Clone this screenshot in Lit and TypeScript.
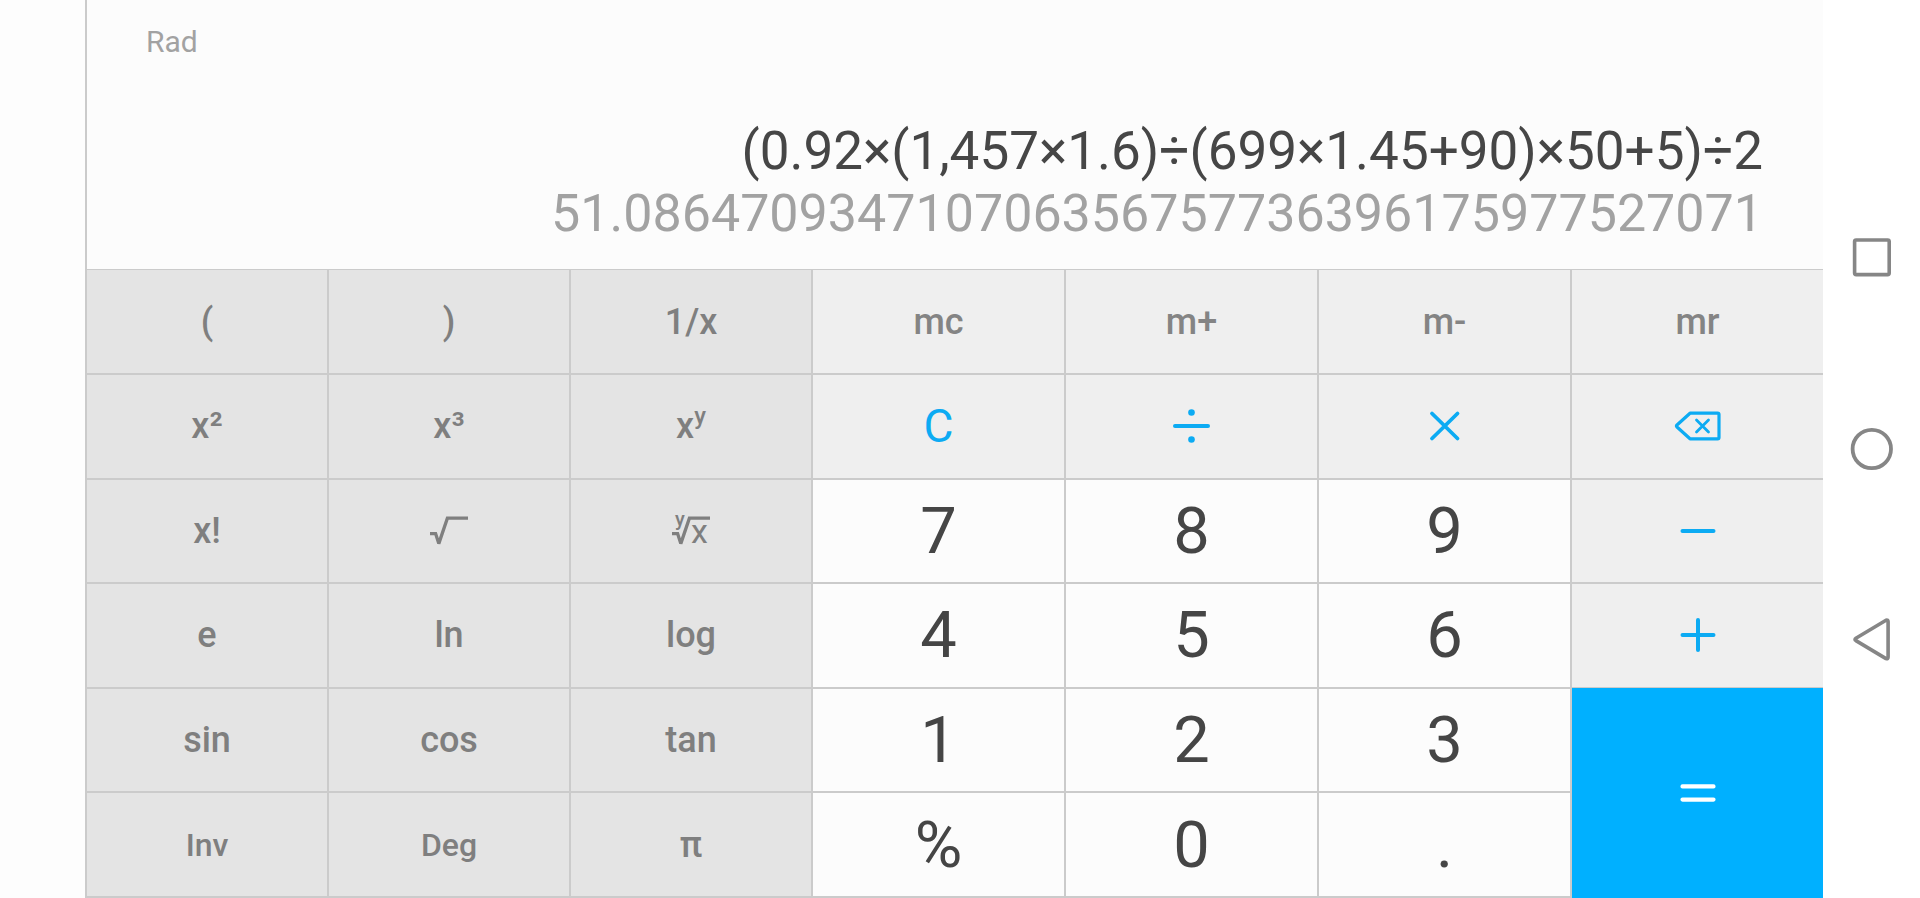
import { LitElement, html, css, svg, TemplateResult } from "lit";
import { customElement, property } from "lit/decorators.js";
import { classMap } from "lit/directives/class-map.js";

type Tone = "science" | "memory" | "action" | "digit" | "equals";

interface Key {
  label: string | TemplateResult;
  tone: Tone;
  name?: string;
  small?: boolean;
}

const icon = (width: number, height: number, body: TemplateResult) => html`
  <svg width=${width} height=${height} viewBox="0 0 ${width} ${height}" fill="none"
    stroke="currentColor" stroke-linecap="round" stroke-linejoin="round" aria-hidden="true">${body}</svg>`;

const divide = icon(40, 40, svg`
  <path d="M3 20H36" stroke-width="4"/>
  <g fill="currentColor" stroke="none"><circle cx="19.5" cy="6.5" r="3.3"/><circle cx="19.5" cy="33.5" r="3.3"/></g>`);
const times = icon(40, 40, svg`<path d="M7 7.5L32.5 32.5M32.5 7.5L7 32.5" stroke-width="3.8"/>`);
const minus = icon(40, 40, svg`<path d="M4.5 20H35.5" stroke-width="4"/>`);
const plus = icon(40, 40, svg`<path d="M4.5 20H35.5M20 5V35" stroke-width="4"/>`);
const equals = icon(40, 40, svg`<path d="M4.5 13.4H35.5M4.5 26.6H35.5" stroke-width="4.2"/>`);
const erase = icon(48, 32, svg`
  <path d="M16 3.2H43.6Q45 3.2 45 4.6V27.4Q45 28.8 43.6 28.8H16L3 17Q2 16 3 15Z" stroke-width="3.2"/>
  <path d="M22.5 10L34.5 22M34.5 10L22.5 22" stroke-width="2.8"/>`);
const root = icon(40, 32, svg`
  <path d="M1 18.6H6.6L9.8 28.6L18.4 3.2H39" stroke-width="3.3" stroke-linecap="butt" stroke-linejoin="miter" stroke-miterlimit="2"/>`);
const nthRoot = icon(40, 32, svg`
  <path d="M1 18.6H6.6L9.8 28.6L18.4 3.2H39" stroke-width="3.3" stroke-linecap="butt" stroke-linejoin="miter" stroke-miterlimit="2"/>
  <g class="glyph"><text x="4" y="11" font-size="20" font-weight="500">y</text>
  <text x="20" y="28" font-size="34" font-weight="400">x</text></g>`);

const sci = (label: Key["label"], name?: string, small = false): Key => ({ label, tone: "science", name, small });
const mem = (label: string): Key => ({ label, tone: "memory" });
const act = (label: Key["label"], name: string): Key => ({ label, tone: "action", name });
const num = (label: string): Key => ({ label, tone: "digit" });

const KEYS: Key[] = [
  sci("("), sci(")"), sci("1/x"), mem("mc"), mem("m+"), mem("m-"), mem("mr"),
  sci("x²"), sci("x³"), sci(html`<span>x<sup class="power">y</sup></span>`, "x to the power of y"),
  act("C", "Clear"), act(divide, "Divide"), act(times, "Multiply"), act(erase, "Delete"),
  sci("x!"), sci(root, "Square root"), sci(nthRoot, "y-th root of x"),
  num("7"), num("8"), num("9"), act(minus, "Subtract"),
  sci("e"), sci("ln"), sci("log"), num("4"), num("5"), num("6"), act(plus, "Add"),
  sci("sin"), sci("cos"), sci("tan"), num("1"), num("2"), num("3"),
  { label: equals, tone: "equals", name: "Equals" },
  sci("Inv", undefined, true), sci("Deg", undefined, true), sci("π"), num("%"), num("0"), num("."),
];

@customElement("calc-display")
class CalcDisplay extends LitElement {
  @property() mode = "";
  @property() expression = "";
  @property() result = "";

  static styles = css`
    :host {
      display: flex;
      flex-direction: column;
      min-height: 0;
      padding: 22px 60px 24px 59px;
      box-sizing: border-box;
      background: #fcfcfc;
    }
    .mode {
      font-size: 30px;
      line-height: 40px;
      color: #a2a2a2;
    }
    .sums {
      display: flex;
      flex-direction: column;
      margin-top: auto;
      text-align: right;
      white-space: nowrap;
    }
    .expression {
      font-size: 53px;
      line-height: 64px;
      color: #464646;
    }
    .result {
      font-size: 52px;
      line-height: 62px;
      color: #a2a2a2;
    }
  `;

  render() {
    return html`
      <span class="mode">${this.mode}</span>
      <div class="sums">
        <span class="expression">${this.expression}</span>
        <output class="result">${this.result}</output>
      </div>`;
  }
}

@customElement("calc-keypad")
class CalcKeypad extends LitElement {
  static styles = css`
    :host {
      display: grid;
      grid-template-columns: repeat(3, 240fr) repeat(4, 251fr);
      grid-template-rows: repeat(6, 1fr);
      gap: 2px;
      padding: 1px 0 2px;
      min-height: 0;
      box-sizing: border-box;
      background: #cbcbcb;
    }
    svg {
      overflow: visible;
    }
    .key {
      display: flex;
      align-items: center;
      justify-content: center;
      min-width: 0;
      min-height: 0;
      margin: 0;
      padding: 0;
      border: 0;
      font: inherit;
      cursor: pointer;
    }
    .science {
      background: #e4e4e4;
      color: #7f7f7f;
      font-size: 36px;
      font-weight: 500;
    }
    .small {
      font-size: 32px;
    }
    .memory {
      background: #efefef;
      color: #848484;
      font-size: 36px;
      font-weight: 500;
    }
    .action {
      background: #efefef;
      color: #0cabf3;
      font-size: 46px;
    }
    .digit {
      background: #fcfcfc;
      color: #454545;
      font-size: 65px;
    }
    .equals {
      grid-row: span 2;
      margin: -1px 0 -2px;
      background: #00b0ff;
      color: #fff;
    }
    .power {
      font-size: 24px;
      line-height: 0;
      vertical-align: 14px;
    }
    .glyph {
      fill: currentColor;
      stroke: none;
    }
  `;

  render() {
    return KEYS.map(
      (key) => html`
        <button type="button" aria-label=${key.name ?? key.label}
          class=${classMap({ key: true, [key.tone]: true, small: !!key.small })}>${key.label}</button>`
    );
  }
}

@customElement("system-nav")
class SystemNav extends LitElement {
  static styles = css`
    :host {
      display: flex;
      flex-direction: column;
      align-items: center;
      justify-content: center;
      gap: 127px;
      background: #fff;
    }
    .nav {
      display: flex;
      align-items: center;
      justify-content: center;
      width: 64px;
      height: 64px;
      padding: 0;
      border: 0;
      background: none;
      color: #868686;
      cursor: pointer;
    }
  `;

  render() {
    return html`
      <button class="nav" type="button" aria-label="Recent apps">
        ${icon(48, 48, svg`<rect x="6.6" y="6" width="34.6" height="34.6" rx="1.6" stroke-width="3.6"/>`)}
      </button>
      <button class="nav" type="button" aria-label="Home">
        ${icon(48, 48, svg`<circle cx="23.8" cy="24" r="19.2" stroke-width="3.8"/>`)}
      </button>
      <button class="nav" type="button" aria-label="Back">
        ${icon(48, 48, svg`<path d="M38 4.2Q40.1 3.6 40.1 5.8V41Q40.1 43.2 38 42.6L7.9 24.6Q6.1 23.4 7.9 22.2Z" stroke-width="3.6"/>`)}
      </button>`;
  }
}

@customElement("app-root")
class AppRoot extends LitElement {
  static styles = css`
    :host {
      display: grid;
      grid-template-columns: 85px 1fr 97px;
      height: 100vh;
      overflow: hidden;
      background: #fdfdfd;
      font-family: Roboto, "Liberation Sans", sans-serif;
    }
    .calculator {
      grid-column: 2;
      display: grid;
      grid-template-rows: 3fr 7fr;
      min-width: 0;
      min-height: 0;
      border-left: 2px solid #cbcbcb;
    }
  `;

  render() {
    return html`
      <main class="calculator">
        <calc-display
          mode="Rad"
          expression="(0.92×(1,457×1.6)÷(699×1.45+90)×50+5)÷2"
          result="51.086470934710706356757736396175977527071"
        ></calc-display>
        <calc-keypad></calc-keypad>
      </main>
      <system-nav></system-nav>`;
  }
}
